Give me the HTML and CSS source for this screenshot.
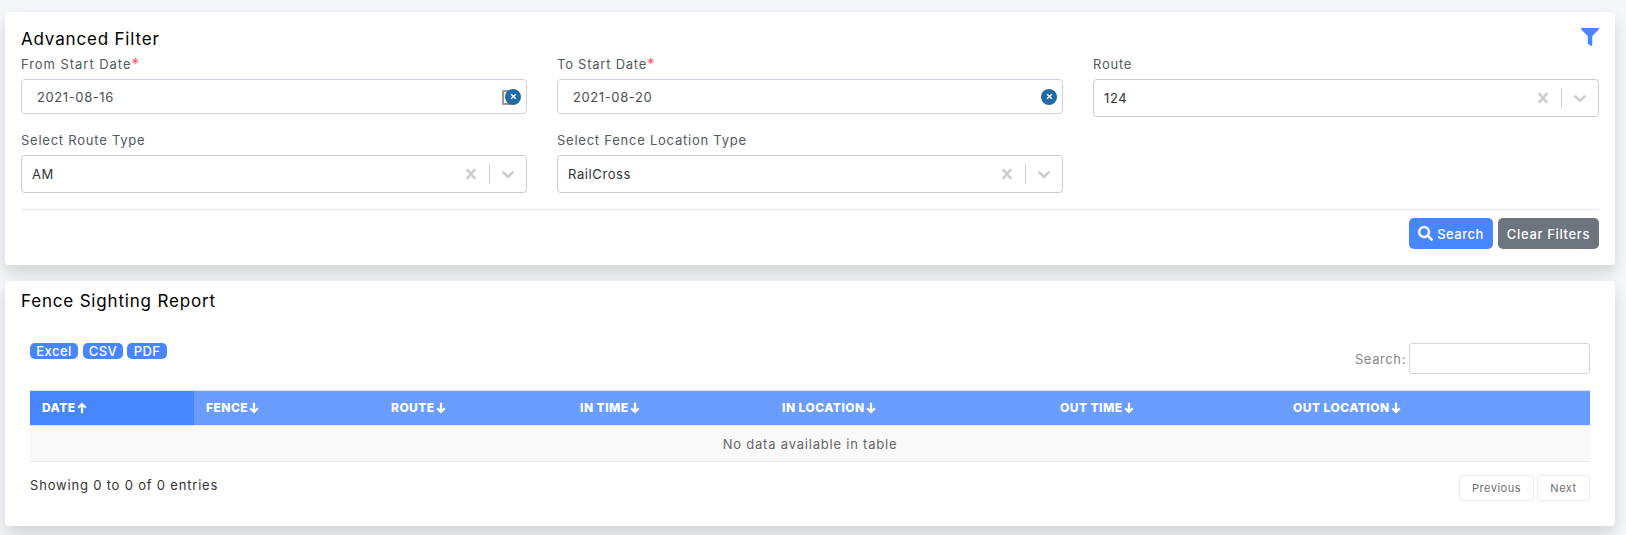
FILE: index.html
```html
<!DOCTYPE html>
<html lang="en">
<head>
<meta charset="utf-8">
<title>Fence Sighting Report</title>
<link rel="stylesheet" href="styles.css">
</head>
<body>
<svg class="defs" width="0" height="0">
  <symbol id="cross" viewBox="0 0 20 20"><path d="M14.348 14.849c-0.469 0.469-1.229 0.469-1.697 0l-2.651-3.030-2.651 3.029c-0.469 0.469-1.229 0.469-1.697 0-0.469-0.469-0.469-1.229 0-1.697l2.758-3.150-2.759-3.152c-0.469-0.469-0.469-1.228 0-1.697s1.228-0.469 1.697 0l2.652 3.031 2.651-3.031c0.469-0.469 1.228-0.469 1.697 0s0.469 1.229 0 1.697l-2.758 3.152 2.758 3.150c0.469 0.469 0.469 1.229 0 1.698z"/></symbol>
  <symbol id="chevron" viewBox="0 0 20 20"><path d="M4.516 7.548c0.436-0.446 1.043-0.481 1.576 0l3.908 3.747 3.908-3.747c0.533-0.481 1.141-0.446 1.574 0 0.436 0.445 0.408 1.197 0 1.615-0.406 0.418-4.695 4.502-4.695 4.502-0.217 0.223-0.502 0.335-0.787 0.335s-0.570-0.112-0.789-0.335c0 0-4.287-4.084-4.695-4.502s-0.436-1.170 0-1.615z"/></symbol>
  <symbol id="down" viewBox="0 0 10 12"><path d="M5 .8v9M1.200 6.200 5 10l3.800-3.800" fill="none" stroke="currentColor" stroke-width="2.200"/></symbol>
</svg>
<section class="card filter">
  <header class="filter-head">
    <h1 class="title">Advanced Filter</h1>
    <svg class="funnel" viewBox="0 0 512 512"><path d="M487.976 0H24.028C2.710 0-8.047 25.866 7.058 40.971L192 225.941V432c0 7.831 3.821 15.170 10.237 19.662l80 55.980C298.020 518.690 320 507.493 320 487.980V225.941l184.947-184.970C520.021 25.896 509.338 0 487.976 0z"/></svg>
  </header>
  <div class="fields">
    <div class="field">
      <label class="label from">From Start Date<span class="required">*</span></label>
      <div class="date"><span>2021-08-16</span><span class="picker"></span><i class="clear"><svg viewBox="0 0 8 8"><path d="M1.300 1.500l5.400 5M6.700 1.500l-5.400 5"/></svg></i></div>
    </div>
    <div class="field">
      <label class="label">To Start Date<span class="required">*</span></label>
      <div class="date"><span>2021-08-20</span><i class="clear"><svg viewBox="0 0 8 8"><path d="M1.300 1.500l5.400 5M6.700 1.500l-5.400 5"/></svg></i></div>
    </div>
    <div class="field">
      <label class="label">Route</label>
      <div class="select"><span class="value">124</span><svg class="ico"><use href="#cross"/></svg><span class="bar"></span><svg class="ico"><use href="#chevron"/></svg></div>
    </div>
    <div class="field">
      <label class="label">Select Route Type</label>
      <div class="select"><span class="value">AM</span><svg class="ico"><use href="#cross"/></svg><span class="bar"></span><svg class="ico"><use href="#chevron"/></svg></div>
    </div>
    <div class="field">
      <label class="label">Select Fence Location Type</label>
      <div class="select"><span class="value">RailCross</span><svg class="ico"><use href="#cross"/></svg><span class="bar"></span><svg class="ico"><use href="#chevron"/></svg></div>
    </div>
  </div>
  <div class="actions">
    <button class="btn primary"><svg class="lens" viewBox="0 0 512 512"><path d="M505 442.700L405.300 343c-4.500-4.500-10.600-7-17-7H372c27.600-35.300 44-79.700 44-128C416 93.100 322.900 0 208 0S0 93.100 0 208s93.100 208 208 208c48.300 0 92.700-16.400 128-44v16.300c0 6.400 2.500 12.500 7 17l99.700 99.700c9.400 9.400 24.600 9.400 33.900 0l28.300-28.300c9.400-9.400 9.400-24.600.1-34zM208 336c-70.700 0-128-57.200-128-128 0-70.700 57.200-128 128-128 70.700 0 128 57.200 128 128 0 70.700-57.200 128-128 128z"/></svg>Search</button>
    <button class="btn secondary">Clear Filters</button>
  </div>
</section>
<section class="card report">
  <h2 class="title">Fence Sighting Report</h2>
  <div class="tools">
    <div class="exports"><button class="tag excel">Excel</button><button class="tag">CSV</button><button class="tag">PDF</button></div>
    <label class="search">Search:<input class="search-box" type="text"></label>
  </div>
  <table class="grid">
    <colgroup><col class="c1"><col class="c2"><col class="c3"><col class="c4"><col class="c5"><col class="c6"><col class="c7"></colgroup>
    <thead>
      <tr>
        <th class="sorted">DATE<svg class="arrow up"><use href="#down"/></svg></th>
        <th>FENCE<svg class="arrow"><use href="#down"/></svg></th>
        <th>ROUTE<svg class="arrow"><use href="#down"/></svg></th>
        <th>IN TIME<svg class="arrow"><use href="#down"/></svg></th>
        <th>IN LOCATION<svg class="arrow"><use href="#down"/></svg></th>
        <th>OUT TIME<svg class="arrow"><use href="#down"/></svg></th>
        <th>OUT LOCATION<svg class="arrow"><use href="#down"/></svg></th>
      </tr>
    </thead>
    <tbody><tr><td colspan="7">No data available in table</td></tr></tbody>
  </table>
  <footer class="foot">
    <span class="info">Showing 0 to 0 of 0 entries</span>
    <nav class="pager"><button class="page prev">Previous</button><button class="page next">Next</button></nav>
  </footer>
</section>
</body>
</html>
```

FILE: styles.css
```css
* { box-sizing: border-box; }
html { overflow: hidden; }
body {
  margin: 0;
  padding: 12px 11px 9px 5px;
  background: #f5f7fb;
  font: 13px/20px Inter, "Liberation Sans", sans-serif;
  letter-spacing: .45px;
  color: #495057;
  display: flex;
  flex-direction: column;
  gap: 16px;
}
button, input { font: inherit; letter-spacing: inherit; }
.defs { position: absolute; }
.card {
  background: #fff;
  border-radius: 4px;
  box-shadow: 0 8px 16px rgba(0, 0, 0, .15);
  padding: 16px;
}
.filter { height: 253px; }
.report { height: 245px; padding-top: 9px; }
.title { margin: 0; font-size: 17px; line-height: 22px; font-weight: 400; color: #000; letter-spacing: .82px; }
.filter-head { display: flex; justify-content: space-between; height: 26px; }
.filter-head .title { line-height: 23px; }
.funnel { width: 18px; height: 18px; fill: #4886ff; }
.fields { display: grid; grid-template-columns: repeat(3, 506px); column-gap: 30px; row-gap: 13px; }
.label { display: block; height: 25px; line-height: 21px; letter-spacing: .76px; color: #52595f; }
.from { letter-spacing: .95px; }
.required { color: #ff5560; font-size: 15px; line-height: 1; }
.date, .select { display: flex; align-items: center; border: 1px solid #ced4da; border-radius: 4px; background: #fff; }
.date { height: 35px; padding: 0 5px 0 15px; justify-content: space-between; position: relative; letter-spacing: .6px; }
.picker { position: absolute; right: 12px; top: 10px; width: 12px; height: 15px; border: 2px solid #999; border-radius: 1px; }
.clear { position: relative; display: grid; place-items: center; width: 16px; height: 16px; border-radius: 50%; background: #216ba5; }
.clear svg { width: 7px; height: 7px; fill: none; stroke: #fff; stroke-width: 1.700; }
.select { height: 38px; padding: 0 8px 0 10px; border-color: #ccc; color: #333; letter-spacing: .6px; }
.value { flex: 1; }
.ico { width: 20px; height: 20px; fill: #ccc; stroke: #ccc; stroke-width: .4; }
.bar { width: 1px; height: 20px; background: #ccc; margin: 0 8px; }
.actions { border-top: 1px solid #e6e6e9; margin-top: 16px; padding-top: 8px; display: flex; justify-content: flex-end; gap: 5px; }
.btn { height: 31px; border: 0; border-radius: 5px; color: #fff; padding: 0; font-weight: 500; letter-spacing: .65px; display: flex; align-items: center; justify-content: center; }
.primary { width: 84px; background: #4886ff; gap: 4px; letter-spacing: .5px; }
.secondary { width: 101px; background: #6c757d; }
.lens { width: 15px; height: 15px; fill: #fff; }
.tools { display: flex; justify-content: space-between; margin: 31px 9px 0; height: 47px; }
.exports { display: flex; gap: 4px; }
.tag { width: 40px; height: 16px; padding: 0; border: 0; border-radius: 5px; background: #4886ff; color: #fff; line-height: 16px; font-weight: 500; }
.excel { width: 48px; margin-right: 1px; }
.search { display: flex; gap: 3px; color: #868686; height: 31px; line-height: 33px; letter-spacing: .6px; }
.search-box { width: 181px; height: 31px; border: 1px solid #d5d6d9; border-radius: 3px; background: #fff; }
.grid { width: 1560px; margin: 0 9px; border-collapse: separate; border-spacing: 0; table-layout: fixed; }
.c1 { width: 164px; } .c2 { width: 185px; } .c3 { width: 189px; } .c4 { width: 202px; }
.c5 { width: 278px; } .c6 { width: 233px; } .c7 { width: 309px; }
th { height: 36px; padding: 0 12px; text-align: left; font-size: 12px; font-weight: 800; letter-spacing: .45px; color: #fff; background: #6b9cff; background-clip: padding-box; border-top: 1px solid #dee2e9; border-bottom: 1px solid #e6e9f2; white-space: nowrap; }
.sorted { background-color: #4886ff; }
.arrow { width: 10px; height: 12px; margin-left: 1px; vertical-align: -2px; }
.up { transform: rotate(180deg); }
td { height: 36px; padding: 0; text-align: center; background: #f9f9f9; border-bottom: 1px solid #e9ebf0; color: #666; letter-spacing: .79px; }
.foot { display: flex; justify-content: space-between; margin: 13px 9px 0; }
.info { color: #333; line-height: 20px; letter-spacing: .81px; }
.pager { display: flex; gap: 3px; }
.page { height: 26px; border: 1px solid #e9e9f4; border-radius: 4px; background: #fff; color: #6c6c70; font-size: 11px; padding: 0; letter-spacing: .5px; }
.prev { width: 75px; }
.next { width: 53px; }
```
